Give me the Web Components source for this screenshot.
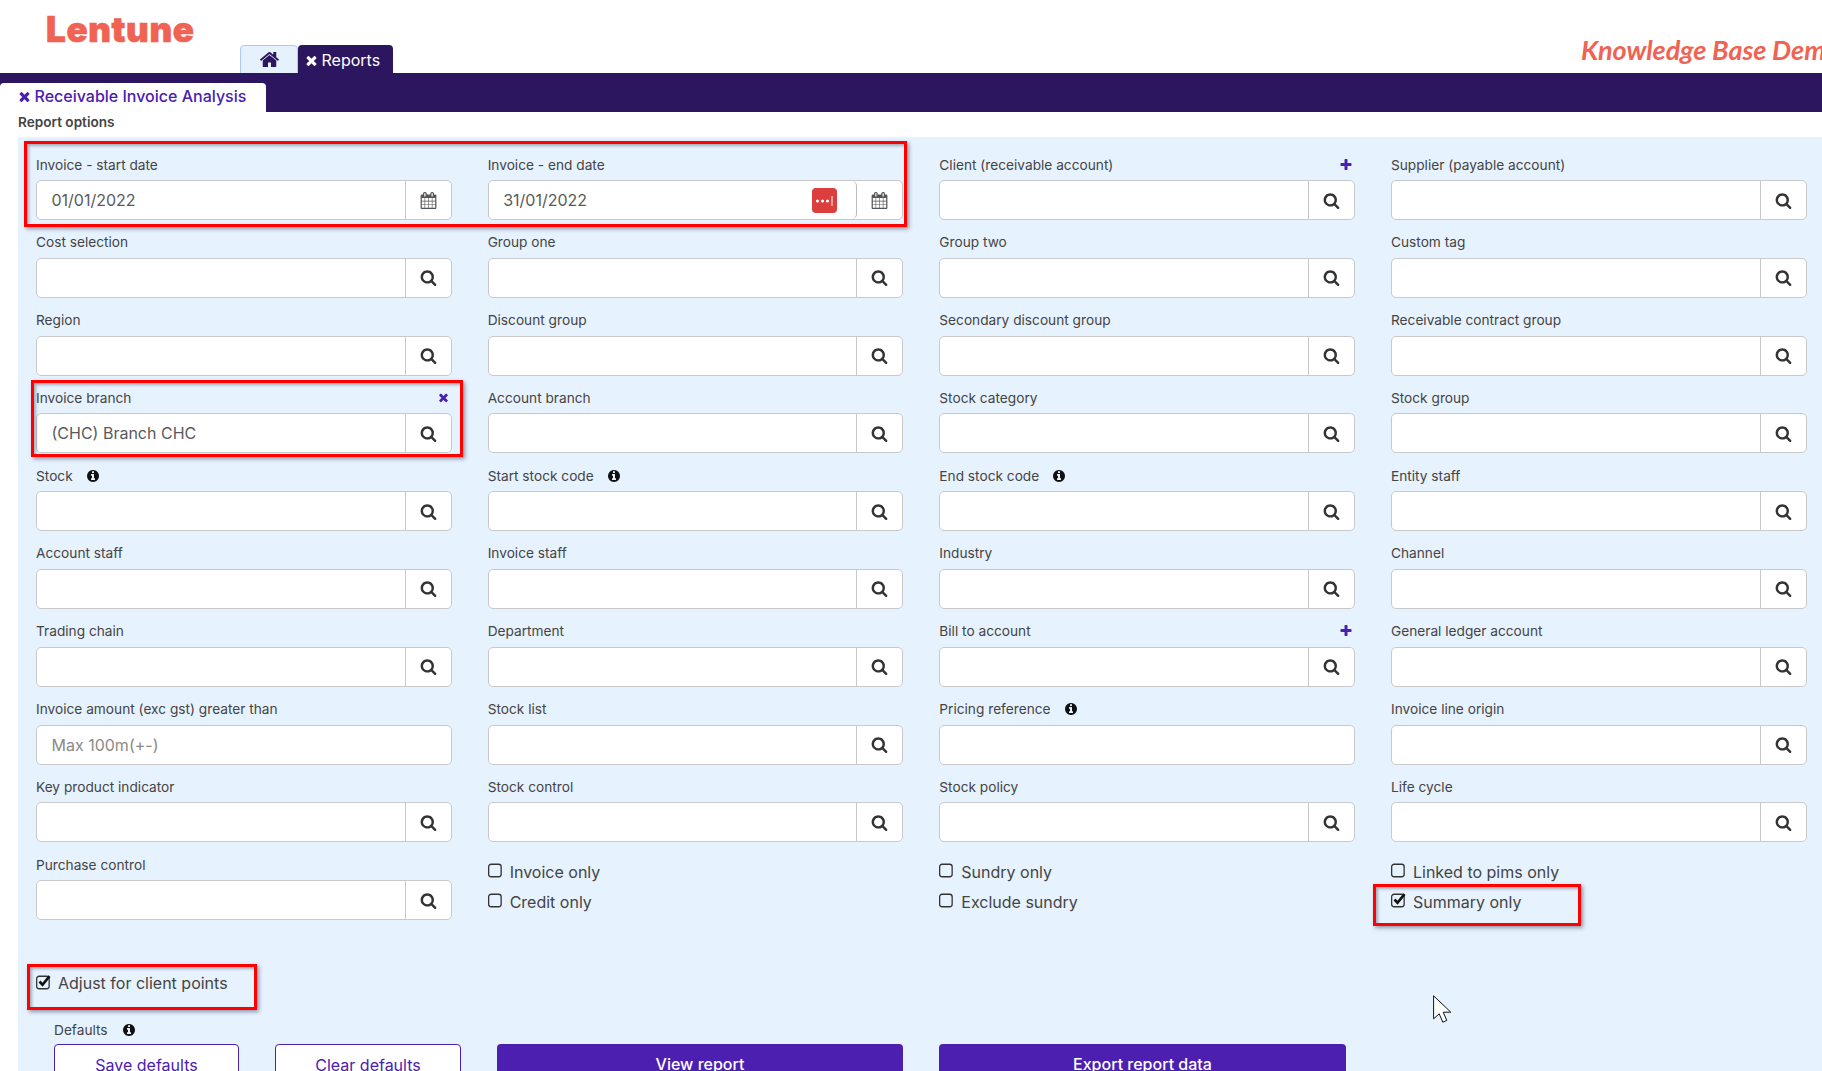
<!DOCTYPE html>
<html lang="en">
<head>
<meta charset="utf-8">
<title>Receivable Invoice Analysis</title>
<style>
    html, body { margin: 0; padding: 0; height: 1071px; overflow: hidden; background: #fff; }
    body { font-family: Inter, "Liberation Sans", sans-serif; color: #444; position: relative; }
</style>
</head>
<body>
<lentune-header></lentune-header>
<report-tabs label="Receivable Invoice Analysis"></report-tabs>
<report-panel>
    <form-field label="Invoice - start date" icon="calendar">01/01/2022</form-field>
    <form-field label="Invoice - end date" icon="calendar" manager>31/01/2022</form-field>
    <form-field label="Client (receivable account)" action="plus"></form-field>
    <form-field label="Supplier (payable account)"></form-field>

    <form-field label="Cost selection"></form-field>
    <form-field label="Group one"></form-field>
    <form-field label="Group two"></form-field>
    <form-field label="Custom tag"></form-field>

    <form-field label="Region"></form-field>
    <form-field label="Discount group"></form-field>
    <form-field label="Secondary discount group"></form-field>
    <form-field label="Receivable contract group"></form-field>

    <form-field label="Invoice branch" action="times">(CHC) Branch CHC</form-field>
    <form-field label="Account branch"></form-field>
    <form-field label="Stock category"></form-field>
    <form-field label="Stock group"></form-field>

    <form-field label="Stock" hint></form-field>
    <form-field label="Start stock code" hint></form-field>
    <form-field label="End stock code" hint></form-field>
    <form-field label="Entity staff"></form-field>

    <form-field label="Account staff"></form-field>
    <form-field label="Invoice staff"></form-field>
    <form-field label="Industry"></form-field>
    <form-field label="Channel"></form-field>

    <form-field label="Trading chain"></form-field>
    <form-field label="Department"></form-field>
    <form-field label="Bill to account" action="plus"></form-field>
    <form-field label="General ledger account"></form-field>

    <form-field label="Invoice amount (exc gst) greater than" icon="none" muted>Max 100m(+-)</form-field>
    <form-field label="Stock list"></form-field>
    <form-field label="Pricing reference" icon="none" hint></form-field>
    <form-field label="Invoice line origin"></form-field>

    <form-field label="Key product indicator"></form-field>
    <form-field label="Stock control"></form-field>
    <form-field label="Stock policy"></form-field>
    <form-field label="Life cycle"></form-field>

    <form-field label="Purchase control"></form-field>
    <check-group>
        <check-field>Invoice only</check-field>
        <check-field>Credit only</check-field>
    </check-group>
    <check-group>
        <check-field>Sundry only</check-field>
        <check-field>Exclude sundry</check-field>
    </check-group>
    <check-group>
        <check-field>Linked to pims only</check-field>
        <check-field checked>Summary only</check-field>
    </check-group>

    <check-field slot="after" checked>Adjust for client points</check-field>
    <report-actions slot="after"></report-actions>
</report-panel>

<red-mark style="left:24px;top:141px;width:883px;height:86px"></red-mark>
<red-mark style="left:31px;top:380px;width:432px;height:77px"></red-mark>
<red-mark style="left:27px;top:964px;width:230px;height:46px"></red-mark>
<red-mark style="left:1373px;top:884px;width:208px;height:42px"></red-mark>
<mouse-pointer style="left:1433px;top:995px"></mouse-pointer>

<script>
const ICONS = {
    search: 'M1216 832q0-185-131.5-316.5t-316.5-131.5-316.5 131.5-131.5 316.5 131.5 316.5 316.5 131.5 316.5-131.5 131.5-316.5zm512 832q0 52-38 90t-90 38q-54 0-90-38l-343-342q-179 124-399 124-143 0-273.5-55.5t-225-150-150-225-55.5-273.5 55.5-273.5 150-225 225-150 273.5-55.5 273.5 55.5 225 150 150 225 55.5 273.5q0 220-124 399l343 343q37 37 37 90z',
    calendar: 'M192 1664h288v-288h-288v288zm352 0h320v-288h-320v288zm-352-352h288v-320h-288v320zm352 0h320v-320h-320v320zm-352-384h288v-288h-288v288zm736 736h320v-288h-320v288zm-384-736h320v-288h-320v288zm768 736h288v-288h-288v288zm-384-352h320v-320h-320v320zm-352-864v-288q0-13-9.5-22.5t-22.5-9.5h-64q-13 0-22.5 9.5t-9.5 22.5v288q0 13 9.5 22.5t22.5 9.5h64q13 0 22.5-9.5t9.5-22.5zm736 864h288v-320h-288v320zm-384-384h320v-288h-320v288zm384 0h288v-288h-288v288zm32-480v-288q0-13-9.5-22.5t-22.5-9.5h-64q-13 0-22.5 9.5t-9.5 22.5v288q0 13 9.5 22.5t22.5 9.5h64q13 0 22.5-9.5t9.5-22.5zm384-64v1280q0 52-38 90t-90 38h-1408q-52 0-90-38t-38-90v-1280q0-52 38-90t90-38h128v-96q0-66 47-113t113-47h64q66 0 113 47t47 113v96h384v-96q0-66 47-113t113-47h64q66 0 113 47t47 113v96h128q52 0 90 38t38 90z',
    home: 'M1472 992v480q0 26-19 45t-45 19h-384v-384h-256v384h-384q-26 0-45-19t-19-45v-480q0-1 .5-3t.5-3l575-474 575 474q1 2 1 6zm223-69l-62 74q-8 9-21 11h-3q-13 0-21-7l-692-577-692 577q-12 8-24 7-13-2-21-11l-62-74q-8-10-7-23.5t11-21.5l719-599q32-26 76-26t76 26l244 204v-195q0-14 9-23t23-9h192q14 0 23 9t9 23v408l219 182q10 8 11 21.5t-7 23.5z',
    info: 'M1152 1376v-160q0-14-9-23t-23-9h-96v-512q0-14-9-23t-23-9h-320q-14 0-23 9t-9 23v160q0 14 9 23t23 9h96v320h-96q-14 0-23 9t-9 23v160q0 14 9 23t23 9h448q14 0 23-9t9-23zm-128-896v-160q0-14-9-23t-23-9h-192q-14 0-23 9t-9 23v160q0 14 9 23t23 9h192q14 0 23-9t9-23zm640 416q0 209-103 385.5t-279.5 279.5-385.5 103-385.5-103-279.5-279.5-103-385.5 103-385.5 279.5-279.5 385.5-103 385.5 103 279.5 279.5 103 385.5z',
    times: 'M1490 1322q0 40-28 68l-136 136q-28 28-68 28t-68-28l-294-294-294 294q-28 28-68 28t-68-28l-136-136q-28-28-28-68t28-68l294-294-294-294q-28-28-28-68t28-68l136-136q28-28 68-28t68 28l294 294 294-294q28-28 68-28t68 28l136 136q28 28 28 68t-28 68l-294 294 294 294q28 28 28 68z',
    plus: 'M1600 736v192q0 40-28 68t-68 28h-416v416q0 40-28 68t-68 28h-192q-40 0-68-28t-28-68v-416h-416q-40 0-68-28t-28-68v-192q0-40 28-68t68-28h416v-416q0-40 28-68t68-28h192q40 0 68 28t28 68v416h416q40 0 68 28t28 68z'
};

function icon(name, size, color) {
    return `<svg width="${size}" height="${size}" viewBox="0 0 1792 1792" fill="${color}" aria-hidden="true"><path d="${ICONS[name]}"/></svg>`;
}

class LentuneHeader extends HTMLElement {
    constructor() {
        super();
        this.attachShadow({ mode: 'open' });
    }

    connectedCallback() {
        this.shadowRoot.innerHTML = `
            <style>
                :host { display: flex; height: 73px; overflow: hidden; position: relative; }
                .logo {
                    width: 240px; box-sizing: border-box; padding: 9px 0 0 46px;
                    font: 900 35px/40px Inter, sans-serif; color: #f06352; letter-spacing: .6px;
                    -webkit-text-stroke: .6px #f06352;
                }
                .tabs { display: flex; align-self: flex-end; gap: 1px; height: 28px; }
                .home {
                    width: 55px; box-sizing: content-box; height: 27px; padding-left: 1px; margin-right: -1px;
                    background: #e6f1fe; border: 1px solid #a9cdf2; border-radius: 4px 4px 0 0;
                    display: flex; align-items: center; justify-content: center;
                }
                .reports {
                    width: 95px; background: #2c1660; color: #fff; border-radius: 4px 4px 0 0;
                    display: flex; align-items: center; gap: 3px; padding: 2px 0 0 5.5px; box-sizing: border-box;
                    font-size: 16px;
                }
                .demo {
                    position: absolute; left: 1581px; top: 30px; white-space: nowrap;
                    font: italic 700 27px/40px Lato, sans-serif; color: #f06352; letter-spacing: -.1px;
                }
            </style>
            <div class="logo">Lentune</div>
            <div class="tabs">
                <div class="home">${icon('home', 21, '#2c1660')}</div>
                <div class="reports">${icon('times', 15, '#fff')}<span>Reports</span></div>
            </div>
            <div class="demo">Knowledge Base Demo</div>
        `;
    }
}

class ReportTabs extends HTMLElement {
    constructor() {
        super();
        this.attachShadow({ mode: 'open' });
    }

    connectedCallback() {
        this.shadowRoot.innerHTML = `
            <style>
                :host { display: flex; height: 39px; background: #2c1660; align-items: flex-end; }
                .tab {
                    width: 266px; height: 29px; box-sizing: border-box; padding: 0 0 3px 16.5px;
                    background: #fff; border-radius: 4px 4px 0 0; color: #4a20b0;
                    display: flex; align-items: center; gap: 3px;
                    font-size: 16px; font-weight: 500; white-space: nowrap;
                }
            </style>
            <div class="tab">${icon('times', 15, '#4a20b0')}<span>${this.getAttribute('label')}</span></div>
        `;
    }
}

class ReportPanel extends HTMLElement {
    constructor() {
        super();
        this.attachShadow({ mode: 'open' });
    }

    connectedCallback() {
        this.shadowRoot.innerHTML = `
            <style>
                :host { display: block; }
                h2 {
                    margin: 0; padding-left: 18px; height: 25px;
                    font-size: 13.6px; line-height: 20px; font-weight: 600; color: #444;
                }
                .body { margin-left: 18px; background: #e7f2ff; height: 934px; box-sizing: border-box; padding: 17px 18px 0; }
                .grid {
                    display: grid;
                    grid-template-columns: repeat(4, 415.67px);
                    grid-auto-rows: 77.8px;
                    column-gap: 36px;
                }
                .after { display: flex; flex-direction: column; margin-top: 39.5px; }
            </style>
            <h2>Report options</h2>
            <div class="body">
                <div class="grid"><slot></slot></div>
                <div class="after"><slot name="after"></slot></div>
            </div>
        `;
    }
}

class FormField extends HTMLElement {
    constructor() {
        super();
        this.attachShadow({ mode: 'open' });
    }

    connectedCallback() {
        const iconName = this.getAttribute('icon') || 'search';
        const action = this.getAttribute('action');
        const manager = this.hasAttribute('manager');
        const addon = iconName === 'none' ? '' : `<div class="addon">${iconName === 'calendar' ? icon('calendar', 17, '#555') : icon('search', 17, '#333')}</div>`;
        this.shadowRoot.innerHTML = `
            <style>
                :host { display: block; font-size: 13.7px; color: #444; }
                .label { height: 26px; display: flex; align-items: center; padding-bottom: 5px; box-sizing: border-box; white-space: nowrap; }
                .hint { display: flex; margin-left: 13px; }
                .action { display: flex; margin-left: auto; margin-right: 2px; }
                .box {
                    height: 40px; box-sizing: border-box; background: #fff;
                    border: 1px solid #c9c9c9; border-radius: 5px;
                    display: flex; overflow: hidden;
                }
                .value {
                    flex: 1; display: flex; align-items: center; padding-left: 14.5px; position: relative;
                    font-size: 16px; color: ${this.hasAttribute('muted') ? '#8a8a8a' : '#5a5a5a'};
                    ${manager ? 'border-right: 1px solid #bcbcbc; border-radius: 0 5px 5px 0;' : ''}
                }
                .addon { width: 45px; flex: none; ${manager ? '' : 'border-left: 1px solid #c9c9c9;'} display: flex; align-items: center; justify-content: center; }
                .manager {
                    position: absolute; right: 19px; top: 7px; width: 25px; height: 25px; border-radius: 4px;
                    background: #dc3d3d; display: flex; align-items: center; justify-content: center;
                }
            </style>
            <div class="label">
                <span>${this.getAttribute('label')}</span>
                ${this.hasAttribute('hint') ? `<span class="hint">${icon('info', 14, '#111')}</span>` : ''}
                ${action ? `<span class="action">${icon(action, action === 'plus' ? 14 : 13, '#4a20b0')}</span>` : ''}
            </div>
            <div class="box">
                <div class="value"><slot></slot>${manager ? `
                    <div class="manager"><svg width="19" height="10" viewBox="0 0 19 10" fill="#fff"><circle cx="2.5" cy="5" r="1.6"/><circle cx="7.5" cy="5" r="1.6"/><circle cx="12.5" cy="5" r="1.6"/><rect x="16.5" y="0" width="1" height="10"/></svg></div>` : ''}</div>
                ${addon}
            </div>
        `;
    }
}

class CheckGroup extends HTMLElement {
    constructor() {
        super();
        this.attachShadow({ mode: 'open' });
    }

    connectedCallback() {
        this.shadowRoot.innerHTML = `
            <style>
                :host { display: flex; flex-direction: column; padding-top: 5.5px; gap: 6px; }
            </style>
            <slot></slot>
        `;
    }
}

class CheckField extends HTMLElement {
    constructor() {
        super();
        this.attachShadow({ mode: 'open' });
    }

    connectedCallback() {
        const tick = this.hasAttribute('checked')
            ? '<path d="M3.5 6.5l3 3.2 7-8.6" fill="none" stroke="#111" stroke-width="2.6"/>'
            : '';
        this.shadowRoot.innerHTML = `
            <style>
                :host { display: flex; align-items: center; gap: 7px; height: 24px; font-size: 16px; color: #444; white-space: nowrap; }
                svg { flex: none; overflow: visible; margin-top: -2px; }
            </style>
            <svg width="15" height="15" viewBox="0 0 15 15">
                <rect x=".65" y="1.25" width="12.5" height="12.5" rx="2.5" fill="none" stroke="#333" stroke-width="1.3"/>
                ${tick}
            </svg>
            <span><slot></slot></span>
        `;
    }
}

class ReportActions extends HTMLElement {
    constructor() {
        super();
        this.attachShadow({ mode: 'open' });
    }

    connectedCallback() {
        this.shadowRoot.innerHTML = `
            <style>
                :host { display: block; padding-left: 18px; margin-top: 22.5px; font-size: 13.7px; color: #444; }
                .label { display: flex; align-items: center; gap: 14px; height: 24px; }
                .row { display: flex; gap: 36px; margin-top: 2px; }
                .btn {
                    height: 42px; box-sizing: border-box; border-radius: 4px; padding-top: 8px;
                    text-align: center; font-size: 16px; line-height: 24px;
                }
                .outline { background: #fff; border: 1px solid #4a20b0; color: #4a20b0; }
                .solid { background: #4c1fb1; color: #fff; font-weight: 500; }
            </style>
            <div class="label"><span>Defaults</span>${icon('info', 14, '#111')}</div>
            <div class="row">
                <div class="btn outline" style="width:185px">Save defaults</div>
                <div class="btn outline" style="width:186px">Clear defaults</div>
                <div class="btn solid" style="width:406px">View report</div>
                <div class="btn solid" style="width:407px">Export report data</div>
            </div>
        `;
    }
}

class RedMark extends HTMLElement {
    constructor() {
        super();
        this.attachShadow({ mode: 'open' });
    }

    connectedCallback() {
        this.shadowRoot.innerHTML = `
            <style>
                :host {
                    display: block; position: absolute; box-sizing: border-box; pointer-events: none;
                    border: 3px solid #f00;
                    box-shadow: 2px 2px 4px rgba(40,40,60,.45), inset 2px 2px 3px rgba(40,40,60,.35);
                }
            </style>
        `;
    }
}

class MousePointer extends HTMLElement {
    constructor() {
        super();
        this.attachShadow({ mode: 'open' });
    }

    connectedCallback() {
        this.shadowRoot.innerHTML = `
            <style>
                :host { display: block; position: absolute; width: 19px; height: 28px; }
            </style>
            <svg width="19" height="28" viewBox="0 0 19 28">
                <path d="M.6.8v23l5.6-5 3.6 8.4 4-1.8-3.6-8.2h7.6z" fill="#fff" stroke="#111" stroke-width="1"/>
            </svg>
        `;
    }
}

customElements.define('lentune-header', LentuneHeader);
customElements.define('report-tabs', ReportTabs);
customElements.define('report-panel', ReportPanel);
customElements.define('form-field', FormField);
customElements.define('check-group', CheckGroup);
customElements.define('check-field', CheckField);
customElements.define('report-actions', ReportActions);
customElements.define('red-mark', RedMark);
customElements.define('mouse-pointer', MousePointer);
</script>
</body>
</html>
